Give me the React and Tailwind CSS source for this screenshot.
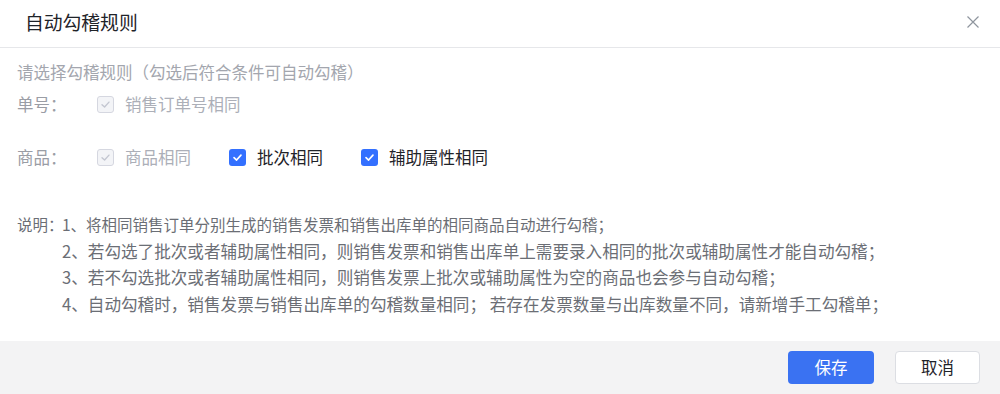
import React from "react";

const font = { fontFamily: '"Noto Sans CJK SC", "Noto Sans", sans-serif' };

function Box({ disabled }) {
  if (disabled) {
    return (
      <span className="w-[17px] h-[17px] rounded-[3px] border border-[#d5d7e0] bg-[#f3f4f7] flex items-center justify-center shrink-0">
        <svg viewBox="0 0 12 12" className="w-[11px] h-[11px]">
          <path d="M2.2 6.2 L5 8.8 L9.8 3.4" fill="none" stroke="#c3c6d1" strokeWidth="1.5" strokeLinecap="round" strokeLinejoin="round" />
        </svg>
      </span>
    );
  }
  return (
    <span className="w-[17px] h-[17px] rounded-[3px] bg-[#3370ff] flex items-center justify-center shrink-0">
      <svg viewBox="0 0 12 12" className="w-[11px] h-[11px]">
        <path d="M2.2 6.2 L5 8.8 L9.8 3.4" fill="none" stroke="#fff" strokeWidth="1.8" strokeLinecap="round" strokeLinejoin="round" />
      </svg>
    </span>
  );
}

function Check({ label, disabled }) {
  return (
    <label className="flex items-center gap-[11px]">
      <Box disabled={disabled} />
      <span className={disabled ? "text-[#acafb8]" : "text-[#1f2329]"}>{label}</span>
    </label>
  );
}

const notes = [
  "2、若勾选了批次或者辅助属性相同，则销售发票和销售出库单上需要录入相同的批次或辅助属性才能自动勾稽；",
  "3、若不勾选批次或者辅助属性相同，则销售发票上批次或辅助属性为空的商品也会参与自动勾稽；",
  "4、自动勾稽时，销售发票与销售出库单的勾稽数量相同； 若存在发票数量与出库数量不同，请新增手工勾稽单；",
];

export default function App() {
  return (
    <div className="w-[1000px] h-[394px] bg-white flex flex-col overflow-hidden" style={font}>
      {/* header */}
      <div className="h-[48px] shrink-0 flex items-center justify-between pl-[25px] pr-[21px] border-b border-[#e6e7ea]">
        <h1 className="text-[18.8px] text-[#1f2329] leading-none -mt-[3px]">自动勾稽规则</h1>
        <svg viewBox="0 0 12 12" className="w-[12px] h-[12px] -mt-[4px]">
          <path d="M0.5 0.5 L11.5 11.5 M11.5 0.5 L0.5 11.5" stroke="#8f959e" strokeWidth="1.2" />
        </svg>
      </div>

      {/* body */}
      <div className="flex-1 pl-[17px] pt-[12px] text-[16.5px]">
        <p className="h-[24px] leading-[24px] text-[#a3a6ae]">请选择勾稽规则（勾选后符合条件可自动勾稽）</p>

        <div className="flex items-center h-[24px] mt-[8px]">
          <span className="w-[80px] text-[#9a9da5]">单号：</span>
          <Check label="销售订单号相同" disabled />
        </div>

        <div className="flex items-center h-[24px] mt-[29px]">
          <span className="w-[80px] text-[#9a9da5]">商品：</span>
          <div className="flex items-center gap-[38px]">
            <Check label="商品相同" disabled />
            <Check label="批次相同" />
            <Check label="辅助属性相同" />
          </div>
        </div>

        <div className="mt-[42px] leading-[26.6px] text-[#6b6e75] whitespace-nowrap">
          <div className="flex text-[15.5px]">
            <span className="w-[45px] shrink-0">说明：</span>
            <span>1、将相同销售订单分别生成的销售发票和销售出库单的相同商品自动进行勾稽；</span>
          </div>
          {notes.map((n) => (
            <div key={n} className="pl-[45px] whitespace-pre text-[16.6px]">{n}</div>
          ))}
        </div>
      </div>

      {/* footer */}
      <div className="h-[53px] shrink-0 bg-[#f3f3f4] flex items-center justify-end gap-[21px] pr-[20px]">
        <button className="w-[86px] h-[33px] rounded-[4px] bg-[#3a72f2] text-white text-[16.5px]">保存</button>
        <button className="w-[85px] h-[33px] rounded-[4px] bg-white border border-[#dcdee3] text-[#1f2329] text-[16.5px]">取消</button>
      </div>
    </div>
  );
}
